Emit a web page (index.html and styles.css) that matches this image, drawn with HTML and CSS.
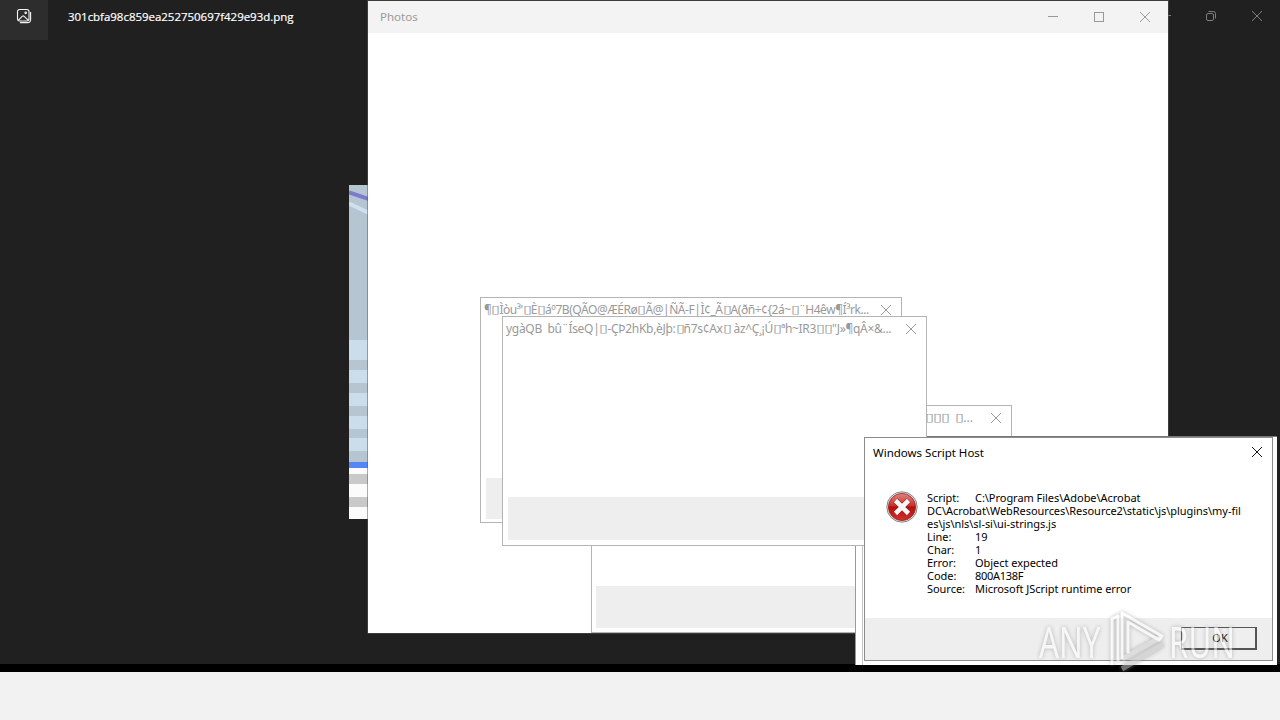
FILE: index.html
```html
<!DOCTYPE html>
<html>
<head>
  <meta charset="utf-8">
  <title>Desktop</title>
  <link rel="stylesheet" href="styles.css">
</head>
<body>
  <div class="desktop">
    <div class="viewer">
      <div class="viewer-bar">
        <div class="viewer-icon">
          <svg width="16" height="16" viewBox="0 0 16 16" fill="none" stroke="#f4f4f4" stroke-width="1.1">
            <rect x="1.5" y="1.5" width="11.5" height="11.5" rx="2.2"/>
            <path d="M2.3 12.4 L6.2 8.3 Q7.2 7.4 8.2 8.3 L12.3 12.4"/>
            <circle cx="9.7" cy="4.8" r="0.8"/>
            <path d="M4 14.6 H11.5 Q14.6 14.6 14.6 11.5 V4"/>
          </svg>
        </div>
        <span class="file-name">301cbfa98c859ea252750697f429e93d.png</span>
        <div class="viewer-controls">
          <svg width="14" height="12" viewBox="0 0 14 12"><path d="M1 5.5H14"/></svg>
          <svg width="12" height="12" viewBox="0 0 12 12"><rect x="1.5" y="3.5" width="7" height="7" rx="1.5"/><path d="M3.5 1.5H8.5Q10.5 1.5 10.5 3.5V8.5"/></svg>
          <svg width="12" height="12" viewBox="0 0 12 12"><path d="M1 1L11 11M11 1L1 11"/></svg>
        </div>
      </div>
      <svg class="picture" width="20" height="334" viewBox="0 0 20 334">
        <rect width="20" height="334" fill="#b5c5d1"/>
        <path d="M0 7.5L20 14" stroke="#7b7dcc" stroke-width="4"/>
        <path d="M0 18.5L20 28" stroke="#cfe0ee" stroke-width="4"/>
        <path fill="#cbdcea" d="M0 155h20v20H0zM0 185h20v13H0zM0 208h20v13H0zM0 231h20v13H0zM0 253h20v13H0z"/>
        <rect y="277" width="20" height="6" fill="#5686f4"/>
        <rect y="283" width="20" height="51" fill="#fbfbfb"/>
        <path fill="#c9c9c9" d="M0 289h20v10H0zM0 312h20v10H0z"/>
      </svg>
    </div>

    <div class="window photos">
      <div class="photos-bar">
        <span>Photos</span>
        <div class="photos-controls">
          <svg width="12" height="12" viewBox="0 0 12 12"><path d="M1 5.5H11"/></svg>
          <svg width="12" height="12" viewBox="0 0 12 12"><rect x="1.5" y="1.5" width="9" height="9"/></svg>
          <svg width="12" height="12" viewBox="0 0 12 12"><path d="M1 1L11 11M11 1L1 11"/></svg>
        </div>
      </div>
    </div>

    <div class="window error error-a">
      <div class="error-bar">
        <span class="error-title title-a">¶<i>▯</i>Ìòu³'<i>▯</i>È<i>▯</i>áº7B(QÃO@ÆÉRø<i>▯</i>Ã@|ÑÃ-F|Ì¢_Ã<i>▯</i>A(ðñ÷¢{2á~<i>▯</i>¨H4êw¶Í³rk...</span>
        <svg class="close" width="12" height="12" viewBox="0 0 12 12"><path d="M1 1L11 11M11 1L1 11"/></svg>
      </div>
      <div class="error-foot"></div>
    </div>

    <div class="window error error-c">
      <div class="error-bar">
        <span class="error-title title-c"><i>▯</i><i>▯</i><i>▯</i>&nbsp; <i>▯</i>...</span>
        <svg class="close" width="12" height="12" viewBox="0 0 12 12"><path d="M1 1L11 11M11 1L1 11"/></svg>
      </div>
      <div class="error-foot"></div>
    </div>

    <div class="window behind"></div>

    <div class="window error error-b">
      <div class="error-bar">
        <span class="error-title title-b">ygàQB&nbsp; bû¨ÍseQ|<i>▯</i>-ÇÞ2hKb,èJþ:<i>▯</i>ñ7s¢Ax<i>▯</i> àz^Ç¸¡Ú<i>▯</i>ªh~IR3<i>▯</i><i>▯</i>"J»¶qÂ×&amp;...</span>
        <svg class="close" width="12" height="12" viewBox="0 0 12 12"><path d="M1 1L11 11M11 1L1 11"/></svg>
      </div>
      <div class="error-foot"></div>
    </div>

    <div class="window script-host">
      <div class="host-bar">
        <span>Windows Script Host</span>
        <svg class="close" width="12" height="12" viewBox="0 0 12 12"><path d="M1 1L11 11M11 1L1 11"/></svg>
      </div>
      <div class="host-body">
        <svg class="stop" width="32" height="32" viewBox="0 0 32 32">
          <defs>
            <linearGradient id="red" x1="0" y1="0" x2="0" y2="1">
              <stop offset="0" stop-color="#df8580"/>
              <stop offset="0.45" stop-color="#ca302d"/>
              <stop offset="0.5" stop-color="#b90c0c"/>
              <stop offset="1" stop-color="#d3312d"/>
            </linearGradient>
          </defs>
          <circle cx="16" cy="16" r="15.2" fill="#e6e6e6" stroke="#858585"/>
          <circle cx="16" cy="16" r="13.6" fill="url(#red)" stroke="#912323" stroke-width="0.8"/>
          <path d="M9.5 9.5L22.5 22.5M22.5 9.5L9.5 22.5" stroke="#8e2020" stroke-width="6"/>
          <path d="M9.5 9.5L22.5 22.5M22.5 9.5L9.5 22.5" stroke="#f6f6f6" stroke-width="4.6"/>
        </svg>
        <div class="message">
          <div class="row"><span class="label">Script:</span><span>C:\Program Files\Adobe\Acrobat</span></div>
          <div class="row">DC\Acrobat\WebResources\Resource2\static\js\plugins\my-fil</div>
          <div class="row">es\js\nls\sl-si\ui-strings.js</div>
          <div class="row"><span class="label">Line:</span><span>19</span></div>
          <div class="row"><span class="label">Char:</span><span>1</span></div>
          <div class="row"><span class="label">Error:</span><span>Object expected</span></div>
          <div class="row"><span class="label">Code:</span><span class="code">800A138F</span></div>
          <div class="row"><span class="label">Source:</span><span>Microsoft JScript runtime error</span></div>
        </div>
      </div>
      <div class="host-foot">
        <button class="ok">OK</button>
      </div>
    </div>

    <div class="watermark">
      <span class="mark-left">ANY</span>
      <svg width="58" height="64" viewBox="0 0 58 64" fill="none" stroke-linejoin="round">
        <path d="M3 56V10L9 7V52" stroke="#fff" stroke-width="3"/>
        <path d="M13 60L54 35" stroke="#c4c4c4" stroke-width="5"/>
        <path d="M13 50L52 28" stroke="#d0d0d0" stroke-width="5"/>
        <path d="M13 50V4L53 27L50 31L19 13V44" stroke="#fff" stroke-width="3"/>
      </svg>
      <span class="mark-right">RUN</span>
    </div>

    <div class="taskbar"></div>
  </div>
</body>
</html>
```
FILE: styles.css
```css
body {
  margin: 0;
  background: #000;
  font-family: "Noto Sans", "DejaVu Sans", sans-serif;
  font-size: 12px;
}

svg {
  display: block;
  flex: none;
}

.desktop {
  position: relative;
  display: flex;
  flex-direction: column;
  width: 1280px;
  height: 720px;
  overflow: hidden;
}

.viewer {
  height: 664px;
  background: #202020;
}

.viewer-bar {
  display: flex;
  height: 40px;
}

.viewer-icon {
  width: 48px;
  box-sizing: border-box;
  padding: 8px 16px;
  background: #2d2d2d;
}

.file-name {
  margin-left: 20px;
  line-height: 33px;
  color: #fff;
  font-family: "Open Sans", sans-serif;
  font-size: 11.5px;
  font-weight: 500;
  letter-spacing: -0.03px;
  -webkit-text-stroke: 0.2px #fff;
}

.viewer-controls {
  display: flex;
  gap: 34px;
  margin-left: auto;
  padding: 10px 17px;
  fill: none;
  stroke: #7d7d7d;
}

.picture {
  margin: 145px 0 0 349px;
}

.taskbar {
  height: 48px;
  margin-top: auto;
  background: #f2f2f2;
}

.window {
  position: absolute;
  box-sizing: border-box;
  background: #fff;
}

.photos {
  left: 367px;
  top: 0;
  width: 802px;
  height: 634px;
  border: 1px solid rgba(90, 90, 90, 0.5);
  background-clip: padding-box;
}

.photos-bar {
  display: flex;
  justify-content: space-between;
  height: 32px;
  padding: 0 17px 0 12px;
  background: #f3f3f3;
  color: #999;
  font-size: 11.5px;
  line-height: 32px;
}

.photos-controls {
  display: flex;
  gap: 34px;
  padding-top: 10px;
  fill: none;
  stroke: #999;
}

.error {
  display: flex;
  flex-direction: column;
  justify-content: space-between;
  border: 1px solid #b4b4b4;
}

.error-bar {
  display: flex;
  justify-content: space-between;
  padding: 0 9px 0 3px;
  line-height: 24px;
  color: #999;
  stroke: #999;
  white-space: nowrap;
}

.error-bar .close {
  margin-top: 6px;
}

.error-title {
  stroke: none;
}

/* missing-glyph boxes */
.error-title i {
  display: inline-block;
  width: 8px;
  font-family: "DejaVu Sans", sans-serif;
  font-style: normal;
  font-size: 11px;
  letter-spacing: 0;
  line-height: 12px;
  transform: translateY(-1px) scaleX(1.5);
  transform-origin: left;
}

.title-a {
  letter-spacing: -0.45px;
}

.title-b {
  letter-spacing: -0.3px;
}

.title-c {
  margin-left: 330px;
}

.error-foot {
  height: 42px;
  margin: 0 4px 4px;
  background: #eee;
}

.error-a {
  left: 480px;
  top: 297px;
  width: 422px;
  height: 226px;
}

.error-a .error-foot {
  height: 41px;
  margin: 0 5px 3px;
}

.error-b {
  left: 502px;
  top: 316px;
  width: 425px;
  height: 230px;
}

.error-b .error-foot {
  height: 43px;
  margin: 0 5px 5px;
}

.error-c {
  left: 591px;
  top: 405px;
  width: 421px;
  height: 228px;
}

.behind {
  left: 855px;
  top: 436px;
  width: 422px;
  height: 229px;
  border-top: 1px solid #777;
  border-left: 1px solid #999;
}

.behind::before {
  content: "";
  display: block;
  width: 6px;
  height: 100%;
  border-right: 1px solid #c4c4c4;
}

.script-host {
  left: 864px;
  top: 437px;
  width: 409px;
  height: 224px;
  display: flex;
  flex-direction: column;
  border: 1px solid #8c8c8c;
}

.host-bar {
  display: flex;
  justify-content: space-between;
  padding: 0 9px 0 8px;
  line-height: 30px;
  stroke: #111;
}

.host-bar span {
  stroke: none;
  font-size: 11.5px;
}

.host-bar .close {
  margin-top: 8px;
}

.host-body {
  display: flex;
  flex: 1;
  padding: 23px 0 0 21px;
}

.message {
  margin-left: 9px;
  font-size: 11px;
  line-height: 13px;
  letter-spacing: -0.04px;
  white-space: nowrap;
}

.row {
  display: flex;
}

.label {
  width: 48px;
}

.code {
  letter-spacing: -0.3px;
}

.host-foot {
  display: flex;
  justify-content: flex-end;
  height: 42px;
  padding-right: 15px;
  background: #eee;
}

.ok {
  width: 76px;
  height: 23px;
  margin-top: 9px;
  padding: 0 0 0 3px;
  border: 1px solid #555;
  border-right-width: 2px;
  border-bottom-width: 2px;
  background: #efefef;
  font-family: "Noto Sans", sans-serif;
  font-size: 11px;
  line-height: 18px;
  color: #000;
}

/* translucent logo over the dialog */
.watermark {
  position: absolute;
  left: 1039px;
  top: 609px;
  display: flex;
  align-items: center;
  opacity: 0.58;
  filter: drop-shadow(0 0 2px #888);
  color: #fff;
  font-size: 44px;
  line-height: 60px;
}

.watermark span {
  display: block;
  width: 65px;
  transform: scaleX(0.71);
  transform-origin: left;
}

.watermark svg {
  margin: 0 2px 0 5px;
}
```
